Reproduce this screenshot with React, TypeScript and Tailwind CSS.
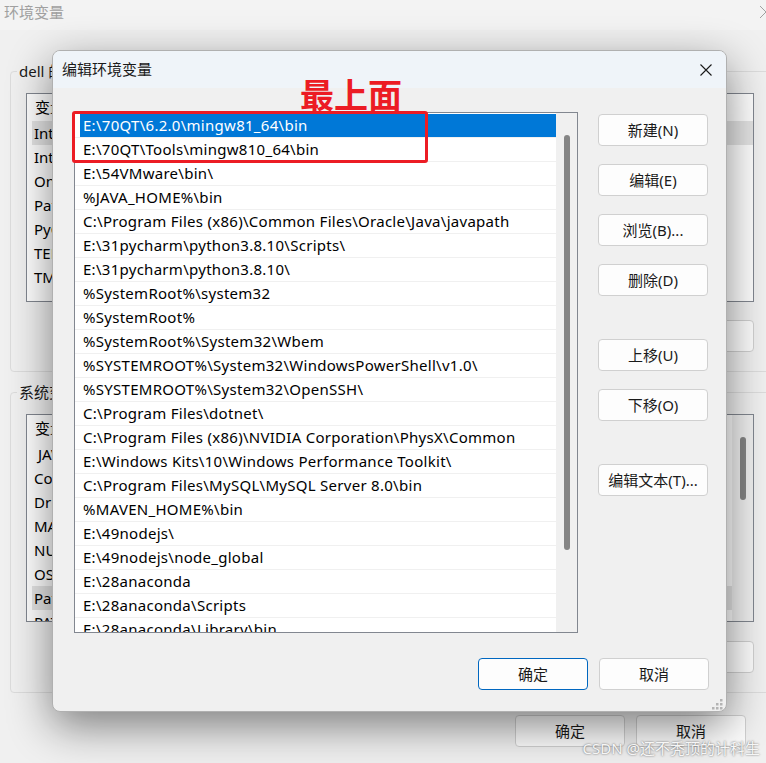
import React from "react";

const userVars = ["IntelliJ IDEA", "IntelliJ IDEA Community Edition", "OneDrive", "Path", "PyCharm", "TEMP", "TMP"];
const sysVars = [" JAVA_HOME", "ComSpec", "DriverData", "MAVEN_HOME", "NUMBER_OF_PROCESSORS", "OS", "Path", "PATHEXT"];

const paths = [
  "E:\\70QT\\6.2.0\\mingw81_64\\bin",
  "E:\\70QT\\Tools\\mingw810_64\\bin",
  "E:\\54VMware\\bin\\",
  "%JAVA_HOME%\\bin",
  "C:\\Program Files (x86)\\Common Files\\Oracle\\Java\\javapath",
  "E:\\31pycharm\\python3.8.10\\Scripts\\",
  "E:\\31pycharm\\python3.8.10\\",
  "%SystemRoot%\\system32",
  "%SystemRoot%",
  "%SystemRoot%\\System32\\Wbem",
  "%SYSTEMROOT%\\System32\\WindowsPowerShell\\v1.0\\",
  "%SYSTEMROOT%\\System32\\OpenSSH\\",
  "C:\\Program Files\\dotnet\\",
  "C:\\Program Files (x86)\\NVIDIA Corporation\\PhysX\\Common",
  "E:\\Windows Kits\\10\\Windows Performance Toolkit\\",
  "C:\\Program Files\\MySQL\\MySQL Server 8.0\\bin",
  "%MAVEN_HOME%\\bin",
  "E:\\49nodejs\\",
  "E:\\49nodejs\\node_global",
  "E:\\28anaconda",
  "E:\\28anaconda\\Scripts",
  "E:\\28anaconda\\Library\\bin",
];

const WinButton = ({ label, primary }: { label: string; primary?: boolean }) => (
  <div
    className={`h-[32px] w-[110px] shrink-0 flex items-center justify-center rounded-[4px] border bg-[#fdfdfd] text-[15px] text-[#1a1a1a] ${
      primary ? "border-[#0067c0]" : "border-[#d0d0d0]"
    }`}
  >
    {label}
  </div>
);

const BgList = ({ rows, selected, height, scroll }: { rows: string[]; selected: number; height: string; scroll?: boolean }) => (
  <div className={`${height} w-[728px] border border-[#828790] bg-white flex overflow-hidden`}>
    <div className="flex-1 overflow-hidden">
      <div className="h-[27px] pl-[8px] leading-[27px] text-[15px]">变量</div>
      {rows.map((r, i) => (
        <div
          key={i}
          className={`h-[24px] ml-[5px] pl-[2px] leading-[24px] text-[15px] whitespace-pre ${i === selected ? "bg-[#e5e5e5]" : ""}`}
        >
          {r}
        </div>
      ))}
    </div>
    {scroll && (
      <div className="w-[21px] bg-[#f0f0f0] pt-[22px] flex justify-center">
        <div className="w-[6px] h-[63px] rounded-full bg-[#858585]" />
      </div>
    )}
  </div>
);

const BgGroup = ({ title, children, className }: { title: string; children: React.ReactNode; className?: string }) => (
  <fieldset className={`ml-[10px] w-[760px] border border-[#dcdcdc] rounded-[4px] ${className ?? ""}`}>
    <legend className="ml-[6px] px-[2px] text-[15px] leading-[18px] text-[#1a1a1a]">{title}</legend>
    <div className="px-[15px] pt-[13px] pb-[19px]">{children}</div>
  </fieldset>
);

const BackgroundWindow = () => (
  <div className="w-[780px] h-[763px] bg-[#f0f0f0]">
    <div className="h-[30px] bg-[#f3f3f3] flex justify-between px-[4px] pt-[1px]">
      <span className="text-[15px] leading-[22px] text-[#a0a0a0]">环境变量</span>
      <svg width="14" height="14" viewBox="0 0 14 14" className="mt-[4px] mr-[3px]">
        <path d="M1 1L13 13M13 1L1 13" stroke="#a0a0a0" strokeWidth="1" />
      </svg>
    </div>
    <BgGroup title="dell 的用户变量" className="mt-[32px]">
      <BgList rows={userVars} selected={0} height="h-[209px]" />
      <div className="mt-[18px] flex justify-end gap-[10px]">
        <WinButton label="新建(N)..." />
        <WinButton label="编辑(E)..." />
        <WinButton label="删除(D)" />
      </div>
    </BgGroup>
    <BgGroup title="系统变量(S)" className="mt-[11px]">
      <BgList rows={sysVars} selected={6} height="h-[208px]" scroll />
      <div className="mt-[19px] flex justify-end gap-[10px]">
        <WinButton label="新建(W)..." />
        <WinButton label="编辑(I)..." />
        <WinButton label="删除(L)" />
      </div>
    </BgGroup>
    <div className="mt-[22px] flex justify-end gap-[11px] pr-[34px]">
      <WinButton label="确定" />
      <WinButton label="取消" />
    </div>
  </div>
);

const EditDialog = () => (
  <div className="absolute left-[52px] top-[50px] w-[675px] h-[662px] rounded-[8px] border border-[#b0b0b0] bg-[#f0f0f0] overflow-hidden shadow-[0_14px_44px_rgba(0,0,0,0.48)]">
    <div className="h-[37px] bg-[#eff4f9] flex items-center justify-between pl-[9px] pr-[14px]">
      <span className="text-[15px] text-[#1a1a1a]">编辑环境变量</span>
      <svg width="12" height="12" viewBox="0 0 12 12">
        <path d="M0.5 0.5L11.5 11.5M11.5 0.5L0.5 11.5" stroke="#1a1a1a" strokeWidth="1.1" />
      </svg>
    </div>

    <div className="flex pl-[21px] pt-[24px]">
      <div className="w-[504px] h-[521px] border border-[#828790] bg-white flex">
        <div className="w-[481px] pt-[1px] overflow-hidden">
          {paths.map((p, i) => (
            <div key={i} className="h-[24px] border-b border-[#f0f0f0]">
              <div
                className={`h-full leading-[23px] text-[15px] tracking-[0.28px] whitespace-nowrap ${
                  i === 0 ? "ml-[5px] pl-[3px] bg-[#0078d7] text-white" : "pl-[8px] text-black"
                }`}
              >
                {p}
              </div>
            </div>
          ))}
        </div>
        <div className="flex-1 bg-[#f0f0f0] pt-[22px] flex justify-center">
          <div className="w-[6px] h-[415px] rounded-full bg-[#858585]" />
        </div>
      </div>

      <div className="ml-[20px] mt-[2px] flex flex-col">
        <WinButton label="新建(N)" />
        <div className="mt-[18px]"><WinButton label="编辑(E)" /></div>
        <div className="mt-[18px]"><WinButton label="浏览(B)..." /></div>
        <div className="mt-[18px]"><WinButton label="删除(D)" /></div>
        <div className="mt-[43px]"><WinButton label="上移(U)" /></div>
        <div className="mt-[18px]"><WinButton label="下移(O)" /></div>
        <div className="mt-[43px]"><WinButton label="编辑文本(T)..." /></div>
      </div>
    </div>

    <div className="mt-[25px] flex justify-end gap-[11px] pr-[17px]">
      <WinButton label="确定" primary />
      <WinButton label="取消" />
    </div>

    {/* resize grip */}
    <svg width="12" height="12" viewBox="0 0 12 12" className="absolute right-[3px] bottom-[1px]">
      {[
        [9, 1],
        [5, 5],
        [9, 5],
        [1, 9],
        [5, 9],
        [9, 9],
      ].map(([x, y], i) => (
        <rect key={i} x={x} y={y} width="2.5" height="2.5" fill="#b4b4b4" />
      ))}
    </svg>
  </div>
);

export default function App() {
  return (
    <div className="relative w-[766px] h-[763px] overflow-hidden font-['Noto_Sans','Noto_Sans_CJK_SC',sans-serif] text-black">
      <BackgroundWindow />
      <EditDialog />

      {/* annotation */}
      <div className="absolute left-[72px] top-[111px] w-[356px] h-[52px] rounded-[3px] border-[3px] border-[#ec1c24]" />
      <div className="absolute left-[300px] top-[72px] text-[34px] leading-[44px] font-bold text-[#ec1c24] font-['Noto_Sans_CJK_SC',sans-serif]">
        最上面
      </div>

      <div className="absolute right-[6px] bottom-[5px] text-[15px] leading-[20px] text-[#f6f6f6] [text-shadow:0_0_2px_#555]">
        CSDN @还不秃顶的计科生
      </div>
    </div>
  );
}
